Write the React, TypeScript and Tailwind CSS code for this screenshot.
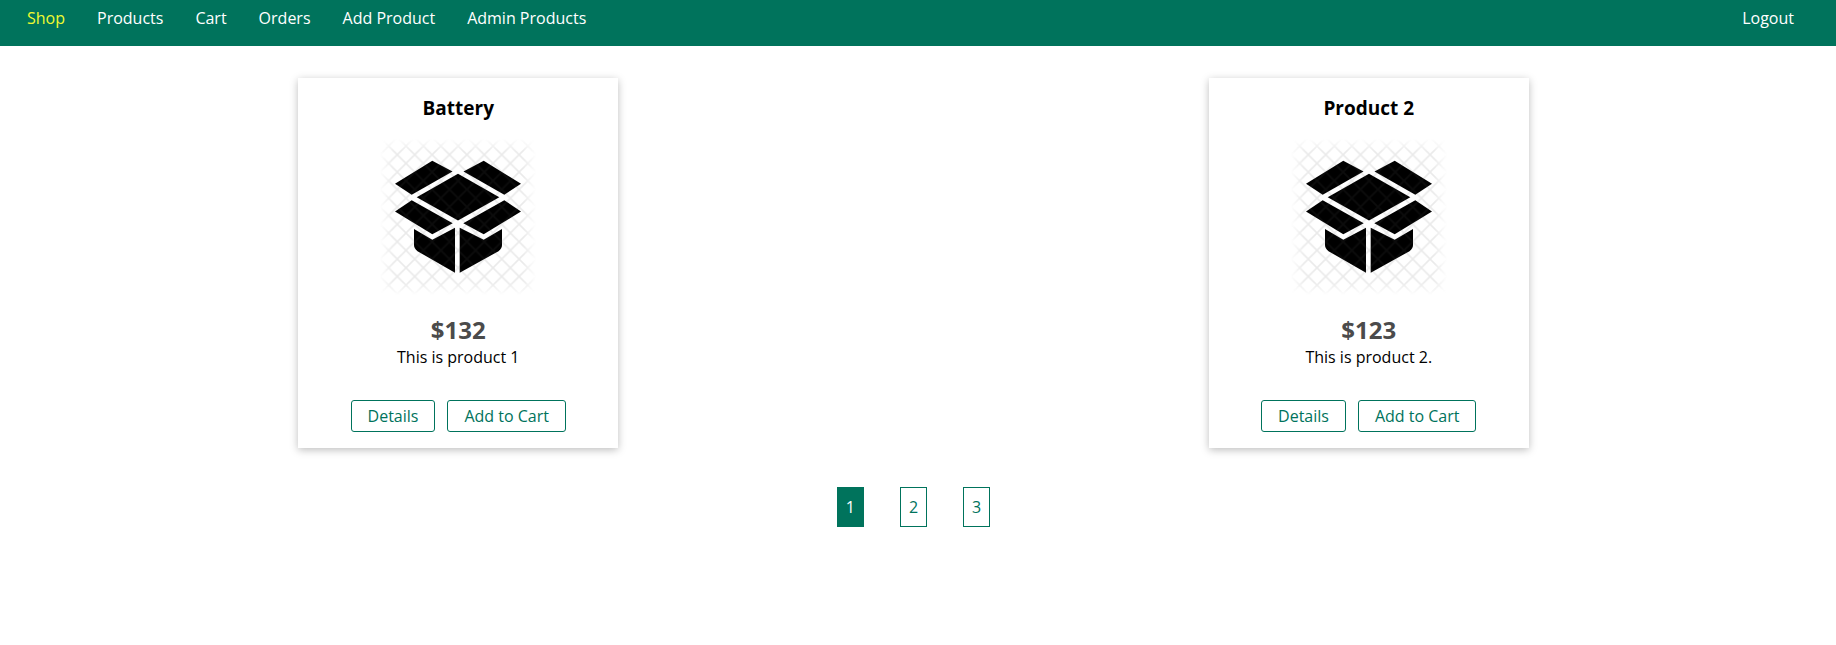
const navItems = ['Shop', 'Products', 'Cart', 'Orders', 'Add Product', 'Admin Products'];

const products = [
  { id: 1, title: 'Battery', price: '$132', description: 'This is product 1' },
  { id: 2, title: 'Product 2', price: '$123', description: 'This is product 2.' },
];

const pages = [1, 2, 3];

function BoxPicture({ id, label }: { id: number; label: string }) {
  return (
    <svg className="size-40" viewBox="0 0 160 160" role="img" aria-label={label}>
      <defs>
        <pattern id={`lattice-${id}`} x="28" y="9" width="17.4" height="17.4" patternUnits="userSpaceOnUse">
          <path
            d="M-2 -2L19.4 19.4M-2 19.4L19.4 -2"
            stroke="#606060"
            strokeOpacity="0.13"
            strokeWidth="1.6"
          />
        </pattern>
        <linearGradient id={`fade-x-${id}`}>
          <stop offset="0.01" stopColor="#000" />
          <stop offset="0.09" stopColor="#fff" />
          <stop offset="0.91" stopColor="#fff" />
          <stop offset="0.99" stopColor="#000" />
        </linearGradient>
        <linearGradient id={`fade-y-${id}`} x1="0" y1="0" x2="0" y2="1">
          <stop offset="0.01" stopColor="#000" />
          <stop offset="0.09" stopColor="#000" stopOpacity="0" />
          <stop offset="0.91" stopColor="#000" stopOpacity="0" />
          <stop offset="0.99" stopColor="#000" />
        </linearGradient>
        <mask id={`edges-${id}`}>
          <rect width="160" height="160" fill={`url(#fade-x-${id})`} />
          <rect width="160" height="160" fill={`url(#fade-y-${id})`} />
        </mask>
      </defs>
      <g fill="#000">
        <path d="M17 46.7L54.3 23.7L74.5 34.5L33.7 57.7Z" />
        <path d="M143 46.7L105.7 23.7L85.5 34.5L126.3 57.7Z" />
        <path d="M80 36.7L121.3 60.3L80 83.6L38.7 60.3Z" />
        <path d="M17 74.5L33.7 63.3L74.7 86.3L54.3 97.2Z" />
        <path d="M143 74.5L126.3 63.3L85.3 86.3L105.7 97.2Z" />
        <path d="M36 92L54.3 102.7L77 90.7V135.7L39.5 114.2Q36 111.5 36 108Z" />
        <path d="M124 92L105.7 102.7L81.7 90.7V135.7L120.5 114.2Q124 111.5 124 108Z" />
      </g>
      <rect width="160" height="160" fill={`url(#lattice-${id})`} mask={`url(#edges-${id})`} />
    </svg>
  );
}

export default function App() {
  return (
    <div className="bg-white font-['Open_Sans',sans-serif] text-base leading-[22px] text-black">
      <header className="bg-[#00735c] pt-[7px] pr-[42px] pb-[17px] pl-[27px]">
        <nav className="flex justify-between">
          <ul className="flex gap-8">
            {navItems.map((item) => (
              <li key={item}>
                <a href="#" className={item === 'Shop' ? 'text-[#f0fa30]' : 'text-white'}>
                  {item}
                </a>
              </li>
            ))}
          </ul>
          <button type="button" className="text-white">
            Logout
          </button>
        </nav>
      </header>

      <main className="pt-8 pr-3 pl-[3px]">
        <div className="flex flex-wrap justify-around">
          {products.map((product) => (
            <article
              key={product.id}
              className="flex w-80 flex-col items-center bg-white py-4 shadow-[0_2px_8px_rgba(0,0,0,0.26)]"
            >
              <h1 className="mb-3.5 text-[19px] leading-[29px] font-bold">{product.title}</h1>
              <BoxPicture id={product.id} label={product.title} />
              <h2 className="mt-4 text-2xl leading-[33px] font-bold text-[#4b4b4b]">{product.price}</h2>
              <p>{product.description}</p>
              <div className="mt-8 flex gap-3">
                <a href="#" className="rounded-[3px] border border-[#00735c] px-4 py-1 text-[#00735c]">
                  Details
                </a>
                <button type="button" className="rounded-[3px] border border-[#00735c] px-4 py-1 text-[#00735c]">
                  Add to Cart
                </button>
              </div>
            </article>
          ))}
        </div>

        <nav aria-label="Pagination" className="mt-[39px] flex justify-center gap-9">
          {pages.map((page) => (
            <a
              key={page}
              href="#"
              className={
                page === 1
                  ? 'border border-[#00735c] bg-[#00735c] p-2 text-white'
                  : 'border border-[#00735c] p-2 text-[#00735c]'
              }
            >
              {page}
            </a>
          ))}
        </nav>
      </main>
    </div>
  );
}
